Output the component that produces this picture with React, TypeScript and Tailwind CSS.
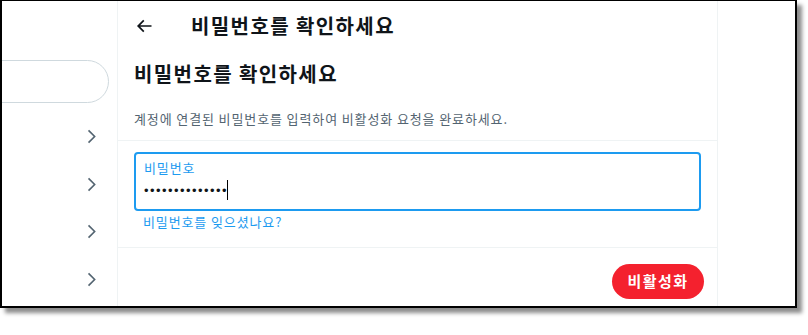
import React from "react";

const font = { fontFamily: '"Noto Sans CJK KR", "Liberation Sans", sans-serif' };

const ChevronRight = () => (
  <svg viewBox="0 0 24 24" className="w-[19px] h-[19px] fill-[#536471]">
    <path d="M14.586 12L7.543 4.96l1.414-1.42L17.414 12l-8.457 8.46-1.414-1.42L14.586 12z" />
  </svg>
);

const BackArrow = () => (
  <svg viewBox="0 0 24 24" className="w-5 h-5 fill-[#0f1419]">
    <path d="M7.414 13l5.043 5.04-1.414 1.42L3.586 12l7.457-7.46 1.414 1.42L7.414 11H21v2H7.414z" />
  </svg>
);

const Sidebar = () => (
  <div className="w-[116px] shrink-0 border-r border-[#eff3f4] flex flex-col">
    <div className="shrink-0 mt-[59px] ml-[-40px] w-[147px] h-[43px] rounded-full border border-[#cfd9de]" />
    <div className="shrink-0 mt-[10px] flex flex-col items-end pr-[16px]">
      {[0, 1, 2, 3].map((i) => (
        <div key={i} className="h-[47.5px] flex items-center">
          <ChevronRight />
        </div>
      ))}
    </div>
  </div>
);

const MainColumn = () => (
  <div className="w-[600px] shrink-0 border-r border-[#eff3f4] flex flex-col tracking-[0.055em]">
    <div className="h-[50px] flex items-center px-4">
      <BackArrow />
      <h1 className="ml-[37px] text-[20px] leading-6 font-bold text-[#0f1419] tracking-[0.07em]">비밀번호를 확인하세요</h1>
    </div>
    <div className="px-4 pt-[11px] pb-[13px] border-b border-[#eff3f4]">
      <h2 className="text-[20px] leading-6 font-bold text-[#0f1419] tracking-[0.07em]">비밀번호를 확인하세요</h2>
      <p className="mt-[25px] text-[13px] leading-4 text-[#536471]">
        계정에 연결된 비밀번호를 입력하여 비활성화 요청을 완료하세요.
      </p>
    </div>
    <div className="px-4 pt-[11px] pb-[17px] border-b border-[#eff3f4]">
      <label className="block h-[59px] rounded border-2 border-[#1d9bf0] px-[8px] pt-[6px]">
        <span className="block text-[13px] leading-4 text-[#1d9bf0]">비밀번호</span>
        <span className="mt-[3px] flex items-center h-[22px]">
          <span
            className="text-[13px] leading-none tracking-[1.45px] text-[#0f1419]"
            style={{ fontFamily: '"Liberation Sans", sans-serif' }}
          >
            ••••••••••••••
          </span>
          <span className="ml-[-1px] w-px h-[20px] bg-black" />
        </span>
      </label>
      <a className="block mt-[3px] ml-[9px] text-[13px] leading-4 text-[#1d9bf0]" href="#">
        비밀번호를 잊으셨나요?
      </a>
    </div>
    <div className="flex justify-end pt-[16px] pr-[13px]">
      <button className="w-[92px] h-[35px] rounded-full bg-[#f4212e] text-white text-[15px] font-bold tracking-[0.1em]">
        비활성화
      </button>
    </div>
  </div>
);

export default function App() {
  return (
    <div className="w-[808px] h-[335px] bg-white" style={font}>
      <div className="w-[797px] h-[308px] border-2 border-t border-black bg-white shadow-[5px_5px_4px_rgba(0,0,0,0.45)] overflow-hidden flex">
        <Sidebar />
        <MainColumn />
        <div className="flex-1" />
      </div>
    </div>
  );
}
